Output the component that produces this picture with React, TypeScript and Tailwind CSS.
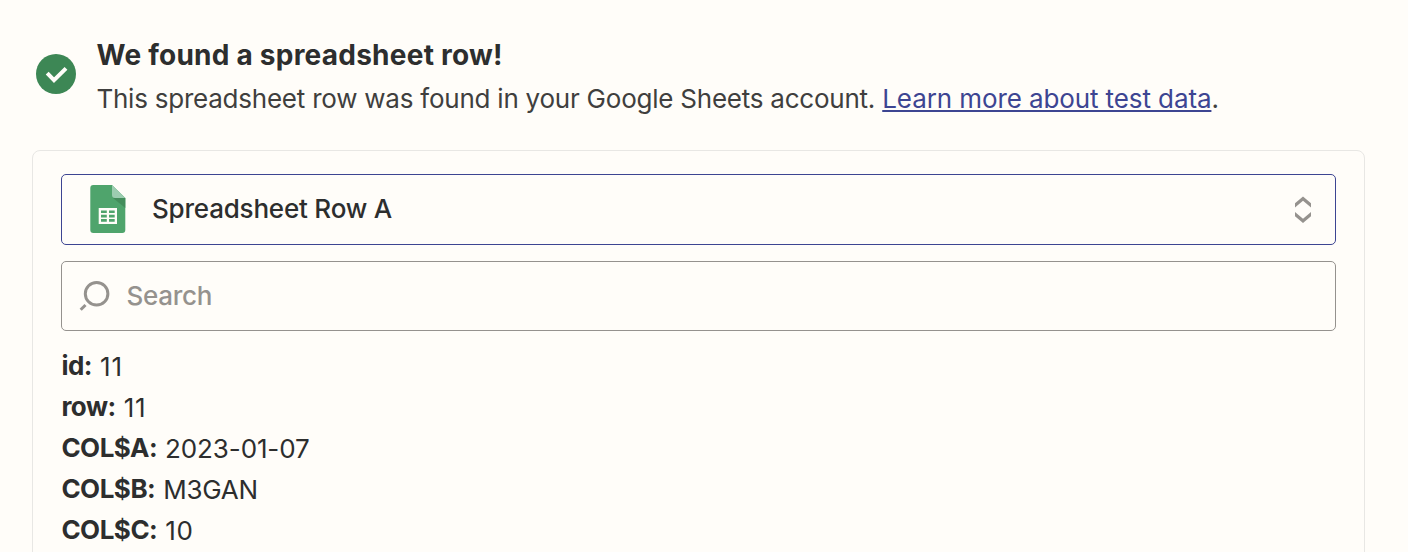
const fields = [
  { name: "id:", value: "11", tracking: "tracking-[0.8px]" },
  { name: "row:", value: "11", tracking: "tracking-[0.8px]" },
  { name: "COL$A:", value: "2023-01-07", tracking: "tracking-[-0.12px]" },
  { name: "COL$B:", value: "M3GAN", tracking: "tracking-[-0.3px]" },
  { name: "COL$C:", value: "10", tracking: "tracking-[0.5px]" },
];

export default function App() {
  return (
    <main className="h-[552px] overflow-hidden bg-[#fffdf9] pl-8 pr-[43px] font-['Inter',sans-serif] text-[26px] leading-[41px] text-[#2d2e2e]">
      <header className="flex h-[150px] pt-[34px]">
        <svg className="mt-5 ml-1 size-10 shrink-0" viewBox="0 0 40 40" fill="none">
          <circle cx="20" cy="20" r="20" fill="#3d8755" />
          <path d="M11.2 19.2L18 26.2L30 14.3" stroke="#fffdf9" strokeWidth="4" />
        </svg>
        <div className="ml-5">
          <h1 className="h-[44px] pl-[0.5px] text-[28px] leading-[42px] font-bold tracking-[0.24px] whitespace-nowrap">We found a spreadsheet row!</h1>
          <p className="pl-[0.4px] leading-[42px] tracking-[-0.23px] whitespace-nowrap text-[#403f3e]">
            This spreadsheet row was found in your Google Sheets account.{" "}
            <a href="#" className="tracking-[-0.1px] text-[#3d4592] underline decoration-2 underline-offset-[2px] [text-decoration-skip-ink:none]">Learn more about test data</a>.
          </p>
        </div>
      </header>
      <section className="h-[420px] rounded-lg border border-[#e8e7e4] px-7 pt-[23px]">
        <button className="flex h-[71px] w-full items-center rounded-[5px] border border-[#3d4592] pr-[22px] pb-0.5 pl-7 text-left font-medium tracking-[-0.2px]">
          <svg className="h-12 w-9 shrink-0" viewBox="0 0 36 48" fill="none">
            <path d="M3 0H22L35.3 13V45Q35.3 48 32.3 48H3.3Q.3 48 .3 45V3Q.3 0 3.3 0Z" fill="#4fa46c" />
            <path d="M23 13H35.3V23Z" fill="#438d5b" />
            <path d="M22 0L35.3 13H25Q22 13 22 10Z" fill="#9ccdb0" />
            <path d="M8.7 23H27V39H8.7Z" fill="#fffdf9" />
            <path d="M11 25.5h5.8v2.6H11ZM19 25.5h5.7v2.6H19ZM11 29.8h5.8v2.6H11ZM19 29.8h5.7v2.6H19ZM11 34.1h5.8v2.6H11ZM19 34.1h5.7v2.6H19Z" fill="#4fa46c" />
          </svg>
          <span className="ml-[26px] flex-1">Spreadsheet Row A</span>
          <svg className="h-7 w-5" viewBox="0 0 20 28" fill="#95928e">
            <path d="M2 8.2L10 1.4L18 8.2V12.5L10 5.7L2 12.5ZM2 17L10 23.7L18 17V21.3L10 28L2 21.3Z" />
          </svg>
        </button>
        <label className="mt-4 flex h-[70px] items-center rounded-[5px] border border-[#95928e] pb-0.5 pl-[17px]">
          <svg className="size-8" viewBox="0 0 32 32" fill="none" stroke="#95928e" strokeWidth="3">
            <circle cx="17.6" cy="14.7" r="11.3" />
            <path d="M6.5 26L1.7 30.8" />
          </svg>
          <input className="ml-[15.5px] min-w-0 flex-1 bg-transparent font-medium tracking-[-0.3px] outline-none placeholder:text-[#95928e]" placeholder="Search" />
        </label>
        <dl className="pt-[14px]">
          {fields.map((field) => (
            <div key={field.name} className="flex h-[41px] gap-2 pl-[0.4px] whitespace-nowrap">
              <dt className="font-bold tracking-[-0.5px]">{field.name}</dt>
              <dd className={`pt-px ${field.tracking}`}>{field.value}</dd>
            </div>
          ))}
        </dl>
      </section>
    </main>
  );
}
